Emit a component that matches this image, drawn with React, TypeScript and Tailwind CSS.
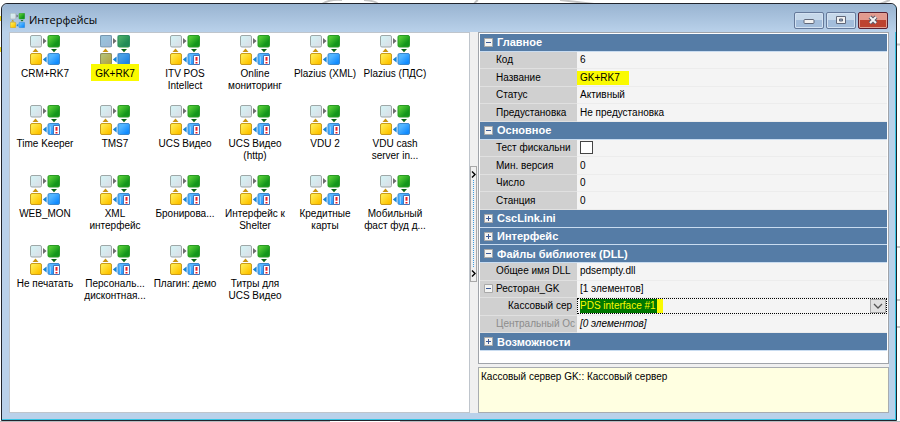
import React, { useState } from "react";
import clsx from "clsx";

interface InterfaceItem {
  lines: string[];
  badge?: boolean;
}

const ITEMS: InterfaceItem[] = [
  { lines: ["CRM+RK7"] },
  { lines: ["GK+RK7"] },
  { lines: ["ITV POS", "Intellect"], badge: true },
  { lines: ["Online", "мониторинг"], badge: true },
  { lines: ["Plazius (XML)"] },
  { lines: ["Plazius (ПДС)"] },
  { lines: ["Time Keeper"], badge: true },
  { lines: ["TMS7"] },
  { lines: ["UCS Видео"], badge: true },
  { lines: ["UCS Видео", "(http)"], badge: true },
  { lines: ["VDU 2"], badge: true },
  { lines: ["VDU cash", "server in..."] },
  { lines: ["WEB_MON"] },
  { lines: ["XML", "интерфейс"], badge: true },
  { lines: ["Бронирова..."], badge: true },
  { lines: ["Интерфейс к", "Shelter"], badge: true },
  { lines: ["Кредитные", "карты"], badge: true },
  { lines: ["Мобильный", "фаст фуд д..."], badge: true },
  { lines: ["Не печатать"], badge: true },
  { lines: ["Персональ...", "дисконтная..."], badge: true },
  { lines: ["Плагин: демо"], badge: true },
  { lines: ["Титры для", "UCS Видео"], badge: true },
];

function NodesIcon({ className, badge, selected }: { className?: string; badge?: boolean; selected?: boolean }) {
  return (
    <svg viewBox="0 0 30 30" className={className} aria-hidden="true">
      <defs>
        <linearGradient id="nodeWhite" x1="0" y1="0" x2="1" y2="1">
          <stop offset="0" stopColor="#d2f5f6" />
          <stop offset="1" stopColor="#dcdce4" />
        </linearGradient>
        <linearGradient id="nodeGreen" x1="0" y1="0" x2="1" y2="1">
          <stop offset="0.2" stopColor="#51c834" />
          <stop offset="0.7" stopColor="#12961a" />
        </linearGradient>
        <linearGradient id="nodeYellow" x1="0" y1="0" x2="1" y2="1">
          <stop offset="0.2" stopColor="#ffe94a" />
          <stop offset="0.8" stopColor="#ffc400" />
        </linearGradient>
        <linearGradient id="nodeBlue" x1="0" y1="0" x2="1" y2="1">
          <stop offset="0.3" stopColor="#52b5ff" />
          <stop offset="0.8" stopColor="#128cff" />
        </linearGradient>
      </defs>
      <rect x="0.5" y="0.5" width="11" height="11.5" rx="1.5" fill="url(#nodeWhite)" stroke="#9fa8a8" />
      <rect x="18" y="0.5" width="11.5" height="11.5" rx="1.5" fill="url(#nodeGreen)" stroke="#2a9a26" />
      <rect x="0.5" y="18.5" width="11" height="11" rx="1.5" fill="url(#nodeYellow)" stroke="#c99a1c" />
      <rect x="18" y="18.5" width="11.5" height="11" rx="1.5" fill="url(#nodeBlue)" stroke="#3c88cc" />
      <path d="M13 3v6l3.6-3z" fill="#6c6c6c" />
      <path d="M21 14h6l-3 3.2z" fill="#0a6414" />
      <path d="M2.5 17h6l-3-3.4z" fill="#c89610" />
      <path d="M16.6 21.5v6l-3.8-3z" fill="#1484d8" />
      {selected && <path d="M0 0h12v12H0zM17.500 0h12.500v12H17.500zM0 18h12v12H0zM17.500 18h12.500v12H17.500z" fill="#3878b8" fillOpacity="0.38" />}
      {badge && (
        <g>
          <path d="M23.500 20.500h6v9h-6z" fill="#fff" stroke="#4474b8" />
          <path d="M20.500 21.500v7.500" stroke="#8ccaff" />
          <path d="M25.500 22h2v3.800h-2zM25.500 27h2v1.500h-2z" fill="#ee1c24" />
        </g>
      )}
    </svg>
  );
}

function ExpandBox({ open }: { open: boolean }) {
  return (
    <svg viewBox="0 0 9 9" className="h-[9px] w-[9px] shrink-0" aria-hidden="true">
      <path d="M0.500 0.500h8v8h-8z" fill="#f4f4f2" stroke="#a9a9a9" />
      <path d={open ? "M2 4.500h5" : "M2 4.500h5M4.500 2v5"} stroke="#3c5a96" />
    </svg>
  );
}

function Section({ title, open = false }: { title: string; open?: boolean }) {
  return (
    <tr className="h-[17px]">
      <th colSpan={2} scope="colgroup" className="border-b border-[#c9dcf0] bg-[#557ca6] p-0 text-left">
        <button type="button" aria-expanded={open} className="flex w-full items-center gap-1 pl-1 text-[11px] leading-3 font-bold text-white">
          <ExpandBox open={open} />
          {title}
        </button>
      </th>
    </tr>
  );
}

interface PropertyProps {
  label: React.ReactNode;
  muted?: boolean;
  children: React.ReactNode;
}

function Property({ label, muted, children }: PropertyProps) {
  return (
    <tr className="h-[17px]">
      <th
        scope="row"
        className={clsx(
          "border-b border-[#e0e0e0] bg-[#d0d0d0] p-0 pl-1 text-left font-normal whitespace-nowrap",
          muted && "text-[#8c8c8c]",
        )}
      >
        {label}
      </th>
      <td className="border-b border-[#ececec] bg-[#f4f4f4] p-0">{children}</td>
    </tr>
  );
}

function WindowButtons() {
  const base = "flex h-[17px] w-[30px] items-center justify-center rounded-xs border";
  const glass = "border-[#65799a] bg-linear-to-b from-[#c6d8ea] from-50% to-[#a3bddb] to-50% inset-ring inset-ring-[#d3e2f2]";
  return (
    <div className="flex gap-0.5">
      <button type="button" aria-label="Свернуть" className={clsx(base, glass)}>
        <svg viewBox="0 0 12 10" className="h-[10px] w-[12px]">
          <rect x="1" y="4.500" width="10" height="4" rx="1" fill="#f2f2f2" stroke="#60687a" />
        </svg>
      </button>
      <button type="button" aria-label="Развернуть" className={clsx(base, glass)}>
        <svg viewBox="0 0 12 10" className="h-[10px] w-[12px]">
          <path d="M1.500 1.500h9v7h-9z" fill="#f2f2f2" stroke="#60687a" />
          <path d="M4.500 4h3v2h-3z" fill="#8ea6c2" stroke="#60687a" />
        </svg>
      </button>
      <button
        type="button"
        aria-label="Закрыть"
        className={clsx(base, "border-[#5c2030] bg-linear-to-b from-[#e29a8e] from-50% to-[#bd4330] to-50% inset-ring inset-ring-[#e0a296]")}
      >
        <svg viewBox="0 0 12 10" className="h-[10px] w-[12px]">
          <path d="M3 2l6 6M9 2l-6 6" stroke="#5c5a6a" strokeWidth="4" />
          <path d="M3 2l6 6M9 2l-6 6" stroke="#f4f4f4" strokeWidth="2" />
        </svg>
      </button>
    </div>
  );
}

function Desktop() {
  return (
    <svg className="absolute inset-0 -z-10 h-full w-full" aria-hidden="true">
      <g fill="none" stroke="#c4c4c4" strokeWidth="2">
        <path d="M322 4q8-5 20-4M364 0q12 1 14 4M474 4q2-3 4-4M560 0l34 4M880 4l10-4" />
        <path d="M896 44.500h6M896 247h6M896 300h6M896 327h6" />
      </g>
      <path d="M0 16v5M0 47v5" stroke="#f5d820" strokeWidth="3" />
      <path d="M0 421.500h330M400 421.500h500" stroke="#b8bcc0" />
    </svg>
  );
}

export default function App() {
  const [selected, setSelected] = useState(1);

  return (
    <div className="relative isolate flex h-screen flex-col bg-white pt-[3px] pr-[3px] pb-px pl-px font-['Liberation_Sans',Arial,sans-serif] text-[10px] leading-3 text-black">
      <Desktop />
      <main className="flex min-h-0 flex-1 flex-col rounded-t-md border border-[#20242c] bg-[#b9d1ea] px-[7px] pb-[7px] inset-shadow-[-1px_-1px_0_#38c4e4]">
        <header className="-mx-[7px] flex h-7 shrink-0 items-center rounded-t-md bg-linear-to-b from-[#99b4d1] to-[#b9d1ea] px-2 pt-1">
          <NodesIcon className="h-[15px] w-[15px]" />
          <h1 className="ml-1 flex-1 font-['Open_Sans','Noto_Sans',sans-serif] text-[11px] leading-4">Интерфейсы</h1>
          <WindowButtons />
        </header>

        <div className="flex min-h-0 flex-1 bg-[#f0f0f0]">
          <section aria-label="Список интерфейсов" className="min-w-0 flex-1 border border-[#bfc5cc] bg-white pt-0.5">
            <ul className="grid auto-rows-[70px] grid-cols-[repeat(auto-fill,70px)]">
              {ITEMS.map((item, i) => (
                <li key={i}>
                  <button type="button" onClick={() => setSelected(i)} className="flex w-full flex-col items-center">
                    <NodesIcon className="h-[30px] w-[30px]" badge={item.badge} selected={i === selected} />
                    <span className={clsx("block text-center whitespace-nowrap", i === selected ? "-mt-px bg-[#fafa00] px-1 pt-1 pb-px" : "pt-[3px]")}>
                      {item.lines.map((line) => (
                        <span key={line} className="block">{line}</span>
                      ))}
                    </span>
                  </button>
                </li>
              ))}
            </ul>
          </section>

          <div className="flex w-2 shrink-0 flex-col pr-px">
            <div className="flex-[134]" />
            <button type="button" aria-label="Свернуть панель" className="flex h-[116px] flex-col items-center justify-between border border-[#a8a8a8] bg-[#f0f0f0] py-1">
              <svg viewBox="0 0 5 7" className="h-[7px] w-[5px]">
                <path d="M1 0.500l3 3-3 3" fill="none" stroke="#000" strokeWidth="1.400" />
              </svg>
              <svg viewBox="0 0 1 88" className="h-[88px] w-px">
                <path d="M0.500 0v88" stroke="#3c9ce0" strokeDasharray="1 1" />
              </svg>
              <svg viewBox="0 0 5 7" className="h-[7px] w-[5px]">
                <path d="M1 0.500l3 3-3 3" fill="none" stroke="#000" strokeWidth="1.400" />
              </svg>
            </button>
            <div className="flex-[131]" />
          </div>

          <aside className="flex w-[411px] shrink-0 flex-col gap-[3px]">
            <div className="min-h-0 flex-1 border border-[#a0a4aa] bg-white px-px pt-px pb-3">
              <table className="h-full w-full table-fixed border-separate border-spacing-0">
                <colgroup>
                  <col className="w-[97px]" />
                  <col />
                </colgroup>
                <tbody>
                  <Section title="Главное" open />
                  <Property label={<span className="pl-3">Код</span>}><span className="pl-[3px]">6</span></Property>
                  <Property label={<span className="pl-3">Название</span>}>
                    <span className="block w-[52px] bg-[#fafa00] py-px pl-[3px]">GK+RK7</span>
                  </Property>
                  <Property label={<span className="pl-3">Статус</span>}><span className="pl-[3px]">Активный</span></Property>
                  <Property label={<span className="pl-3">Предустановка</span>}><span className="pl-[3px]">Не предустановка</span></Property>
                  <Section title="Основное" open />
                  <Property label={<label htmlFor="fiscal" className="pl-3">Тест фискальни</label>}>
                    <input id="fiscal" type="checkbox" className="ml-[3px] block h-[13px] w-[13px] appearance-none border border-[#444] bg-white checked:bg-[#557ca6]" />
                  </Property>
                  <Property label={<span className="pl-3">Мин. версия</span>}><span className="pl-[3px]">0</span></Property>
                  <Property label={<span className="pl-3">Число</span>}><span className="pl-[3px]">0</span></Property>
                  <Property label={<span className="pl-3">Станция</span>}><span className="pl-[3px]">0</span></Property>
                  <Section title="CscLink.ini" />
                  <Section title="Интерфейс" />
                  <Section title="Файлы библиотек (DLL)" open />
                  <Property label={<span className="pl-3">Общее имя DLL</span>}><span className="pl-[3px]">pdsempty.dll</span></Property>
                  <Property
                    label={
                      <button type="button" aria-expanded="true" className="flex items-center gap-[3px]">
                        <ExpandBox open />
                        Ресторан_GK
                      </button>
                    }
                  >
                    <span className="pl-[3px]">[1 элементов]</span>
                  </Property>
                  <Property label={<label htmlFor="server" className="pl-6">Кассовый сер</label>}>
                    <div className="flex h-4 items-stretch border border-dotted border-black pl-0.5">
                      <select
                        id="server"
                        className="min-w-0 flex-1 appearance-none bg-[linear-gradient(to_right,#007800_77px,#fafa00_77px,#fafa00_83px,transparent_83px)] leading-3 text-[#fafa00]"
                      >
                        <option>PDS interface #1</option>
                      </select>
                      <span className="pointer-events-none flex w-4 items-center justify-center border border-[#a8a8a8] bg-[#e1e1e1]">
                        <svg viewBox="0 0 10 6" className="h-[6px] w-[10px]" aria-hidden="true">
                          <path d="M1 1l4 4 4-4" fill="none" stroke="#555" strokeWidth="1.300" />
                        </svg>
                      </span>
                    </div>
                  </Property>
                  <Property muted label={<span className="pl-3">Центральный Ос</span>}><span className="pl-[3px] italic">[0 элементов]</span></Property>
                  <Section title="Возможности" />
                </tbody>
              </table>
            </div>
            <p className="h-[46px] shrink-0 border border-[#a8acb0] bg-[#ffffe1] px-0.5 py-[3px]">Кассовый сервер GK:: Кассовый сервер</p>
          </aside>
        </div>
      </main>
    </div>
  );
}
